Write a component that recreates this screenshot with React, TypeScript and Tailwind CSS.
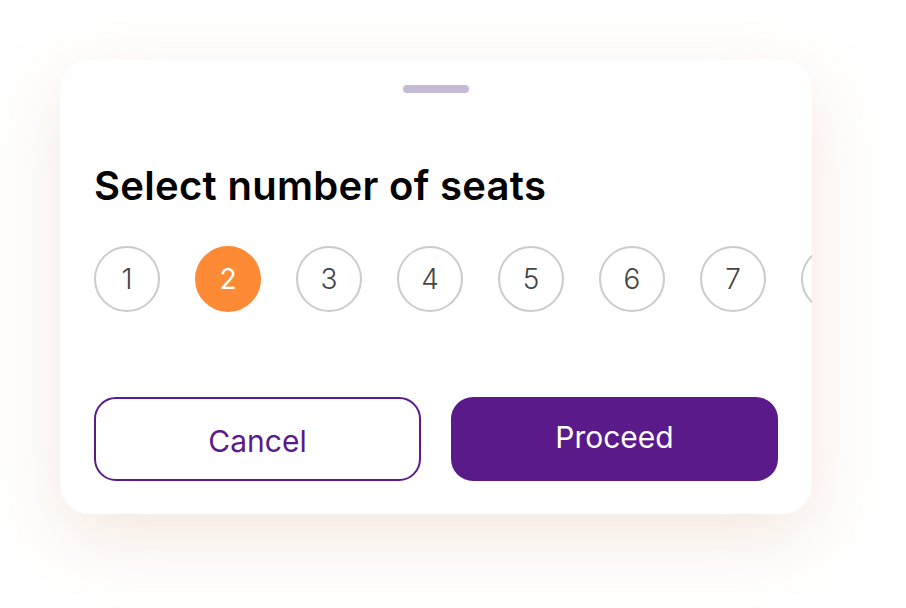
import React, { useState } from 'react';

const seats = [1, 2, 3, 4, 5, 6, 7, 8];

export default function App() {
  const [selected, setSelected] = useState(2);

  return (
    <div
      className="w-[906px] h-[608px] bg-white pt-[60px] pl-[60px]"
      style={{ fontFamily: 'Inter, "Noto Sans", sans-serif' }}
    >
      <div className="w-[752px] h-[454px] rounded-[30px] bg-white overflow-hidden flex flex-col shadow-[0_24px_70px_rgba(214,170,135,0.28)]">
        {/* ручка */}
        <div className="mt-[25px] mx-auto w-[66px] h-[8px] rounded-full bg-[#c6bad7]" />

        <h2 className="mt-[69px] pl-[34px] text-[40px] leading-[48px] font-semibold text-black tracking-[0.3px]">
          Select number of seats
        </h2>

        <div className="mt-[36px] pl-[34px] flex gap-[35px]">
          {seats.map((n) => (
            <button
              key={n}
              onClick={() => setSelected(n)}
              className={
                n === selected
                  ? 'shrink-0 w-[66px] h-[66px] rounded-full bg-[#fd8b36] border-2 border-[#fd8b36] text-white text-[28px] font-normal flex items-center justify-center'
                  : 'shrink-0 w-[66px] h-[66px] rounded-full bg-white border-2 border-[#cbcbcb] text-[#444] text-[28px] font-light flex items-center justify-center'
              }
            >
              {n}
            </button>
          ))}
        </div>

        <div className="mt-[85px] pl-[34px] flex gap-[30px]">
          <button className="w-[327px] h-[84px] rounded-[22px] border-2 border-[#5b1a8b] text-[#5b1a8b] text-[30px] font-normal pt-[4px]">
            Cancel
          </button>
          <button className="w-[327px] h-[84px] rounded-[22px] bg-[#5a1a8a] text-white text-[30px] font-normal pb-[4px]">
            Proceed
          </button>
        </div>
      </div>
    </div>
  );
}
